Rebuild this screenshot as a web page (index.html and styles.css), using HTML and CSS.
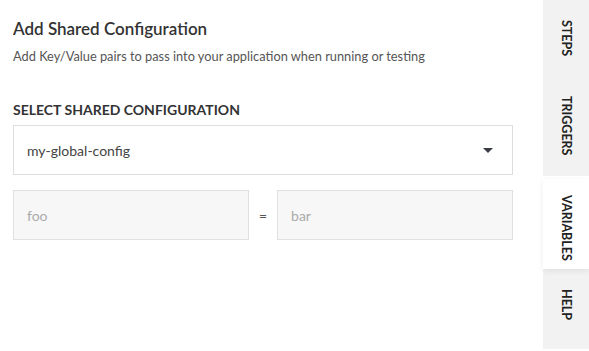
FILE: index.html
```html
<!DOCTYPE html>
<html lang="en">
  <head>
    <meta charset="UTF-8" />
    <meta name="viewport" content="width=device-width, initial-scale=1.0" />
    <title>Add Shared Configuration</title>
    <link rel="stylesheet" href="styles.css">
  </head>
  <body>
    <div class="layout">
      <main class="panel">
        <h1>Add Shared Configuration</h1>
        <p class="hint">Add Key/Value pairs to pass into your application when running or testing</p>

        <h2>Select Shared Configuration</h2>
        <div class="select">
          <span>my-global-config</span>
          <span class="caret"></span>
        </div>

        <div class="pair">
          <input type="text" placeholder="foo" disabled />
          <span class="eq">=</span>
          <input type="text" placeholder="bar" disabled />
        </div>
      </main>

      <nav class="tabs">
        <div class="tab">Steps</div>
        <div class="tab">Triggers</div>
        <div class="tab active">Variables</div>
        <div class="tab">Help</div>
      </nav>
    </div>
  </body>
</html>
```

FILE: styles.css
```css
* {
  margin: 0;
  padding: 0;
  box-sizing: border-box;
  font-family: "Lato", sans-serif;
}

body {
  background: #ffffff;
  color: #333333;
}

.layout {
  display: flex;
  height: 351px;
  overflow: hidden;
}

.panel {
  flex: 1;
  padding: 17px 30px 0 13px;
}

h1 {
  font-size: 17px;
  font-weight: 600;
  color: #333333;
  line-height: 24px;
}

.hint {
  margin-top: 7px;
  font-size: 12.8px;
  color: #555555;
  line-height: 16px;
}

h2 {
  margin-top: 38px;
  font-size: 14px;
  font-weight: 700;
  text-transform: uppercase;
  color: #333333;
  line-height: 16px;
}

.select {
  margin-top: 7px;
  height: 50px;
  border: 1px solid #dddddd;
  background: #ffffff;
  display: flex;
  align-items: center;
  justify-content: space-between;
  padding: 0 19px 0 13px;
  font-size: 14px;
  color: #444444;
}

.caret {
  width: 0;
  height: 0;
  border-left: 5px solid transparent;
  border-right: 5px solid transparent;
  border-top: 5px solid #3a3d45;
}

.pair {
  margin-top: 15px;
  display: flex;
  align-items: center;
  gap: 10px;
}

.pair input {
  flex: 1;
  min-width: 0;
  height: 50px;
  border: 1px solid #e0e0e0;
  background: #f7f7f7;
  padding: 0 13px;
  font-size: 14px;
}

.pair input::placeholder {
  color: #aaaaaa;
}

.eq {
  font-size: 14px;
  color: #555555;
}

.tabs {
  width: 46px;
  display: flex;
  flex-direction: column;
  background: #ffffff;
}

.tab {
  writing-mode: vertical-rl;
  background: #f2f2f2;
  padding: 20px 0;
  font-size: 12.5px;
  font-weight: 700;
  text-transform: uppercase;
  color: #222222;
  display: flex;
  align-items: center;
  line-height: 46px;
}

.tab:last-child {
  flex: 1;
  margin-bottom: 2px;
}

.tab.active {
  background: #ffffff;
  margin-top: 3px;
  padding: 16px 0 9px;
  box-shadow: 0 2px 6px rgba(0, 0, 0, 0.08);
  position: relative;
}
```
